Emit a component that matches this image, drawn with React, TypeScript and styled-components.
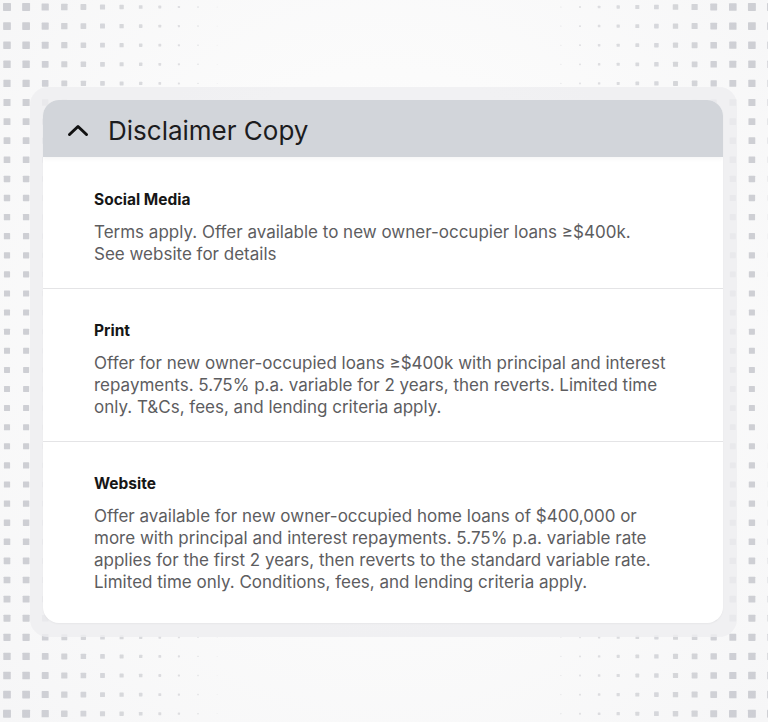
import React from 'react';
import styled, { createGlobalStyle } from 'styled-components';

const GlobalStyle = createGlobalStyle`
  html, body {
    margin: 0;
    padding: 0;
    background: #f7f7f8;
  }
  body {
    font-family: Inter, "Noto Sans", sans-serif;
    -webkit-font-smoothing: antialiased;
  }
`;

const Page = styled.div`
  position: relative;
  width: 768px;
  height: 722px;
  overflow: hidden;
  background: radial-gradient(ellipse at 50% 45%, #ffffff 0%, #fbfbfb 45%, #f6f6f7 100%);
`;

const DotLayer = styled.svg`
  position: absolute;
  inset: 0;
  pointer-events: none;
`;

const Content = styled.div`
  position: relative;
  display: flex;
  padding: 87px 31px 0 30px;
`;

const Frame = styled.div`
  flex: 1;
  padding: 13px 14px 14px 13px;
  border-radius: 18px;
  background: rgba(238, 238, 240, 0.82);
`;

const Card = styled.section`
  background: #ffffff;
  border-radius: 16px;
  overflow: hidden;
  box-shadow: 0 1px 2px rgba(0, 0, 0, 0.04);
`;

const Header = styled.button`
  display: flex;
  align-items: center;
  gap: 19px;
  width: 100%;
  height: 57px;
  padding: 3px 24px 0;
  border: none;
  background: #d2d5da;
  box-shadow: 0 2px 4px rgba(0, 0, 0, 0.04);
  cursor: pointer;
  text-align: left;
`;

const HeaderTitle = styled.h2`
  margin: 0;
  font-family: Inter, "Noto Sans", sans-serif;
  font-size: 26px;
  font-weight: 400;
  color: #1c1c1e;
`;

const Section = styled.div<{ $first?: boolean; $last?: boolean }>`
  padding: ${p => (p.$first ? '33px' : '32px')} 51px ${p => (p.$last ? '30px' : '23px')};
  border-bottom: ${p => (p.$last ? 'none' : '1px solid #e4e4e6')};
`;

const SectionTitle = styled.h3`
  margin: 0 0 11px;
  font-size: 15.5px;
  line-height: 20px;
  font-weight: 700;
  color: #161616;
`;

const SectionText = styled.p`
  margin: 0;
  font-size: 17px;
  line-height: 22px;
  color: #5d5d5f;
`;

const Chevron = () => (
  <svg width="22" height="14" viewBox="0 0 22 14" fill="none">
    <polyline
      points="2.5,11.5 11,3.5 19.5,11.5"
      stroke="#111"
      strokeWidth="3"
      strokeLinecap="round"
      strokeLinejoin="round"
    />
  </svg>
);

const Dots = () => {
  const rects: React.ReactNode[] = [];
  const step = 19.1;
  for (let r = 0; r < 38; r++) {
    for (let c = 0; c < 41; c++) {
      const cx = 7 + c * step;
      const cy = 7 + r * step;
      const nx = Math.min(1, Math.abs(cx - 384) / 384);
      const ny = Math.min(1, Math.abs(cy - 361) / 361);
      const base = Math.max(0, Math.min(1, (nx - 0.38) / 0.55));
      const s = 8 * base * (0.75 + 0.25 * ny * ny);
      if (s < 0.6) continue;
      rects.push(
        <rect
          key={`${r}-${c}`}
          x={cx - s / 2}
          y={cy - s / 2}
          width={s}
          height={s}
          rx={0.6}
          fill="#c9cacf"
          opacity={0.45 + 0.45 * base}
        />
      );
    }
  }
  return (
    <DotLayer width="768" height="722" viewBox="0 0 768 722">
      {rects}
    </DotLayer>
  );
};

const sections = [
  {
    title: 'Social Media',
    lines: ['Terms apply. Offer available to new owner-occupier loans ≥$400k.', 'See website for details'],
  },
  {
    title: 'Print',
    lines: [
      'Offer for new owner-occupied loans ≥$400k with principal and interest',
      'repayments. 5.75% p.a. variable for 2 years, then reverts. Limited time',
      'only. T&Cs, fees, and lending criteria apply.',
    ],
  },
  {
    title: 'Website',
    lines: [
      'Offer available for new owner-occupied home loans of $400,000 or',
      'more with principal and interest repayments. 5.75% p.a. variable rate',
      'applies for the first 2 years, then reverts to the standard variable rate.',
      'Limited time only. Conditions, fees, and lending criteria apply.',
    ],
  },
];

export default function App() {
  return (
    <>
      <GlobalStyle />
      <Page>
        <Dots />
        <Content>
          <Frame>
            <Card>
              <Header>
                <Chevron />
                <HeaderTitle>Disclaimer Copy</HeaderTitle>
              </Header>
              {sections.map((s, i) => (
                <Section key={s.title} $first={i === 0} $last={i === sections.length - 1}>
                  <SectionTitle>{s.title}</SectionTitle>
                  <SectionText>
                    {s.lines.map((l, j) => (
                      <React.Fragment key={j}>
                        {l}
                        {j < s.lines.length - 1 && <br />}
                      </React.Fragment>
                    ))}
                  </SectionText>
                </Section>
              ))}
            </Card>
          </Frame>
        </Content>
      </Page>
    </>
  );
}
